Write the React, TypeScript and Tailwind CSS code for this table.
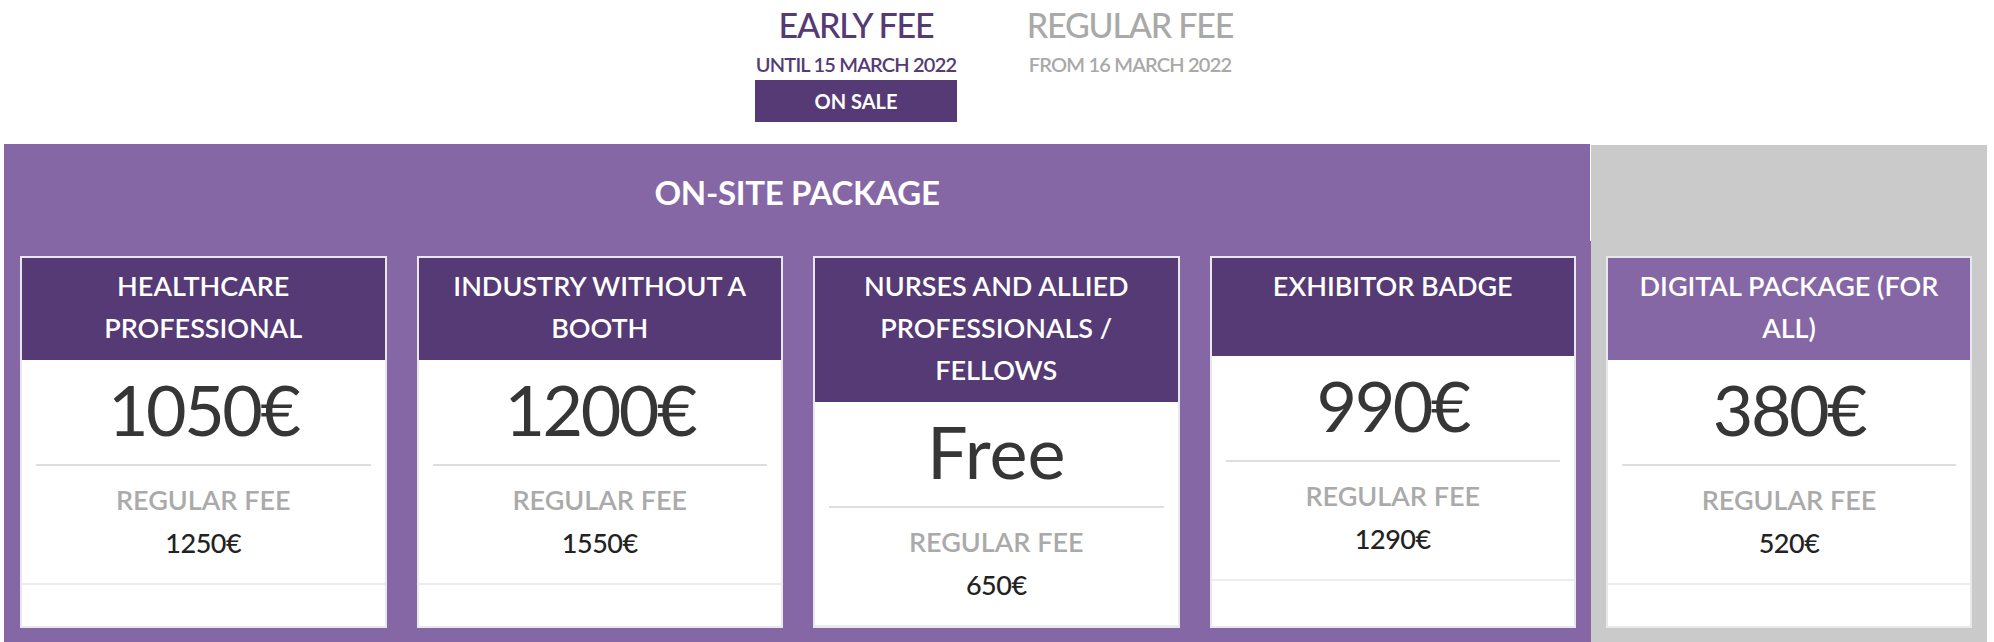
import React from "react";

type Card = {
  title: string;
  price: string;
  regular: string;
  headerBg: string;
  headerH: string;
};

const onsite: Card[] = [
  { title: "HEALTHCARE PROFESSIONAL", price: "1050€", regular: "1250€", headerBg: "bg-[#553a75]", headerH: "min-h-[102px]" },
  { title: "INDUSTRY WITHOUT A BOOTH", price: "1200€", regular: "1550€", headerBg: "bg-[#553a75]", headerH: "min-h-[102px]" },
  { title: "NURSES AND ALLIED PROFESSIONALS / FELLOWS", price: "Free", regular: "650€", headerBg: "bg-[#553a75]", headerH: "min-h-[102px]" },
  { title: "EXHIBITOR BADGE", price: "990€", regular: "1290€", headerBg: "bg-[#553a75]", headerH: "h-[98px]" },
];

const digital: Card = {
  title: "DIGITAL PACKAGE (FOR ALL)",
  price: "380€",
  regular: "520€",
  headerBg: "bg-[#8667a5]",
  headerH: "min-h-[102px]",
};

function PriceCard({ c }: { c: Card }) {
  const numeric = /\d/.test(c.price);
  return (
    <div className="box-border h-[372px] overflow-hidden border-2 border-[#e8e7ec] bg-white flex flex-col">
      <div
        className={`${c.headerBg} ${c.headerH} shrink-0 px-[15px] pt-[7px] pb-[11px] text-center text-[27px] leading-[42px] font-semibold text-white`}
      >
        {c.title}
      </div>
      <div
        className={`shrink-0 pt-[6px] text-center leading-[86px] text-[#363636] ${
          numeric ? "text-[70px] tracking-[-2.5px]" : "text-[72px]"
        }`}
      >
        {c.price}
      </div>
      <div className="shrink-0 mx-[14px] mt-[12px] h-[2px] bg-[#dedede]" />
      <div className="shrink-0 mt-[18px] text-center text-[27px] leading-[32px] font-semibold text-[#aaaaaa]">
        REGULAR FEE
      </div>
      <div className="shrink-0 mt-[10px] text-center text-[27px] leading-[34px] tracking-[-0.5px] font-medium text-[#222222]">
        {c.regular}
      </div>
      <div className="shrink-0 mt-[23px] h-[2px] bg-[#ececef]" />
      <div className="shrink-0 h-[44px]" />
    </div>
  );
}

export default function App() {
  return (
    <div className="w-[1994px] h-[642px] overflow-hidden bg-white font-['Lato','Noto_Sans',sans-serif]">
      {/* Fee headings */}
      <div className="flex h-[144px] pl-[755px]">
        <div className="w-[202px] flex flex-col items-center">
          <div className="pt-[3px] whitespace-nowrap text-[34px] leading-[44px] tracking-[-1.2px] font-medium text-[#553a75]">
            EARLY FEE
          </div>
          <div className="mt-[4px] whitespace-nowrap text-[20px] leading-[26px] tracking-[-0.8px] font-semibold text-[#553a75]">
            UNTIL 15 MARCH 2022
          </div>
          <div className="mt-[3px] w-[202px] h-[42px] bg-[#553a75] flex items-center justify-center whitespace-nowrap text-[20px] font-bold text-white">
            ON SALE
          </div>
        </div>
        <div className="ml-[72px] w-[202px] flex flex-col items-center">
          <div className="pt-[3px] whitespace-nowrap text-[34px] leading-[44px] tracking-[-1.2px] font-medium text-[#a9a9a9]">
            REGULAR FEE
          </div>
          <div className="mt-[4px] whitespace-nowrap text-[20px] leading-[26px] tracking-[-0.8px] font-semibold text-[#a9a9a9]">
            FROM 16 MARCH 2022
          </div>
        </div>
      </div>

      {/* Packages */}
      <div className="flex pl-[4px] pr-[7px]">
        <div className="w-[1587px] bg-[#8667a5] pb-[30px]">
          <div className="h-[97px] border-r border-white flex items-center justify-center text-[33px] font-bold tracking-[-0.3px] text-white">
            ON-SITE PACKAGE
          </div>
          <div className="grid grid-cols-4 gap-[30px] pl-[16px] pr-[15px] pt-[15px]">
            {onsite.map((c) => (
              <PriceCard key={c.title} c={c} />
            ))}
          </div>
        </div>
        <div className="flex-1 mt-[1px] bg-[#cacaca] px-[15px] pt-[111px] pb-[30px]">
          <PriceCard c={digital} />
        </div>
      </div>
    </div>
  );
}
